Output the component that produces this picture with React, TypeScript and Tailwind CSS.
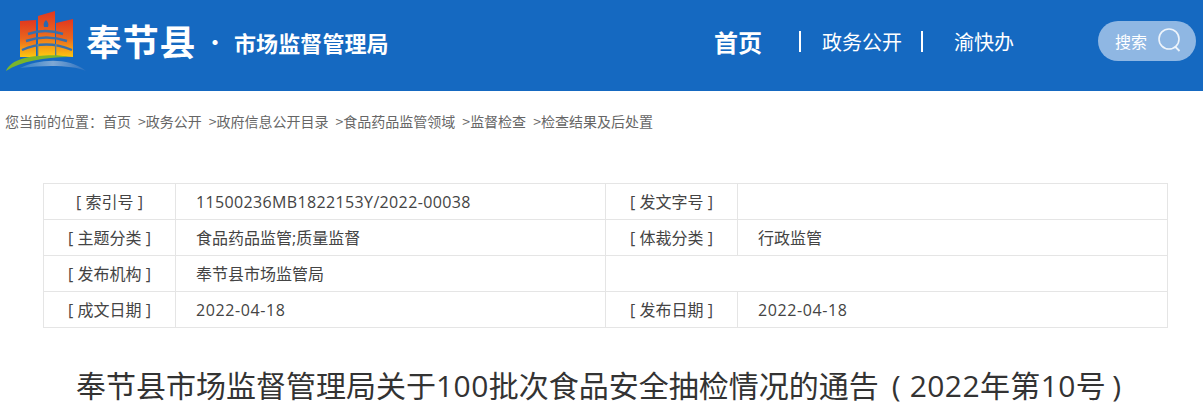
const font = { fontFamily: '"Open Sans", "Noto Sans CJK SC", sans-serif' };
const cjk = { fontFamily: '"Noto Sans CJK SC", sans-serif' };

const crumbs = ['政务公开', '政府信息公开目录', '食品药品监管领域', '监督检查', '检查结果及后处置'];

const rows = [
  ['[ 索引号 ]', '11500236MB1822153Y/2022-00038', '[ 发文字号 ]', ''],
  ['[ 主题分类 ]', '食品药品监管;质量监督', '[ 体裁分类 ]', '行政监管'],
  ['[ 发布机构 ]', '奉节县市场监管局', '', ''],
  ['[ 成文日期 ]', '2022-04-18', '[ 发布日期 ]', '2022-04-18'],
];

function Logo() {
  return (
    <svg width="82" height="62" viewBox="0 0 82 62" className="shrink-0">
      <defs>
        <linearGradient id="sky" x1="0" y1="0" x2="0" y2="1">
          <stop offset="0" stopColor="#e0371f" />
          <stop offset="0.5" stopColor="#e9651d" />
          <stop offset="1" stopColor="#fdc60f" />
        </linearGradient>
        <linearGradient id="swoosh" x1="0" y1="0" x2="1" y2="0">
          <stop offset="0" stopColor="#2f7fc8" />
          <stop offset="0.5" stopColor="#7fa8d4" />
          <stop offset="1" stopColor="#2a70c0" />
        </linearGradient>
      </defs>
      <path d="M15 11 L31 10 V47 L15 47 Z" fill="url(#sky)" />
      <path d="M33 6 L50 1 V46 L33 46 Z" fill="url(#sky)" />
      <path d="M51 13 L68 9 V47 L51 46 Z" fill="url(#sky)" />
      <path d="M41 10 c-2 2 -3 4 -2 7 h4 c1 -3 0 -5 -2 -7 Z" fill="#2a68b0" />
      <path d="M23 24 Q40 18 58 24 M21 31 Q41 24 62 31 M17 40 Q41 29 67 40" fill="none" stroke="#3a6fa8" strokeWidth="2.4" />
      <path d="M33 34 V46 M51 34 V46" stroke="#8a8f6a" strokeWidth="1" />
      <path d="M1 61 C5 51 20 46 40 45.5 C50 45 58 45.5 63 47 C40 47.5 16 51 1 61 Z" fill="#7ab52b" />
      <path d="M15 58 C32 50 62 46 81 61 C68 55 40 55 15 58 Z" fill="url(#swoosh)" />
    </svg>
  );
}

function Cell({ text, center }: { text: string; center?: boolean }) {
  const latin = /^[\x00-\x7f]+$/.test(text);
  const spacing = !latin || center ? '' : text.length > 10 ? 'tracking-[0.36px]' : 'tracking-[0.6px]';
  return (
    <td className={`border border-[#e5e5e5] py-0 ${center ? 'text-center px-0' : 'pl-[20px]'} ${spacing}`}>
      {text}
    </td>
  );
}

export default function App() {
  return (
    <div className="w-[1203px] h-[416px] overflow-hidden bg-white" style={font}>
      <header className="h-[91px] pb-[8px] bg-[#1569c1] flex items-center text-white" style={cjk}>
        <div className="ml-[5px] mt-[-2px]">
          <Logo />
        </div>
        <span className="ml-[-1px] text-[36px] tracking-[0.7px] font-bold leading-none mt-[-3px] w-[118px]">奉节县</span>
        <span className="ml-[-4px] w-[30px] text-center text-[20px] font-bold leading-none">·</span>
        <span className="ml-[4px] text-[22px] tracking-[0.1px] font-bold leading-none w-[156px]">市场监督管理局</span>
        <nav className="ml-[324px] flex items-center">
          <span className="text-[24px] font-bold leading-none w-[48px]">首页</span>
          <span className="ml-[37px] w-[2px] h-[21px] bg-white" />
          <span className="ml-[21px] text-[20px] leading-none w-[80px]">政务公开</span>
          <span className="ml-[19px] w-[2px] h-[21px] bg-white" />
          <span className="ml-[31px] text-[20px] leading-none w-[60px]">渝快办</span>
        </nav>
        <div className="ml-[84px] w-[98px] h-[40px] mt-[-1px] rounded-[20px] bg-[#8fb7e3] flex items-center pl-[17px]">
          <span className="text-[16px] leading-none w-[34px]">搜索</span>
          <svg width="24" height="25" viewBox="0 0 24 25" className="ml-[9px] shrink-0 mb-[1px]" fill="none" stroke="#ffffff" strokeOpacity="0.85">
            <circle cx="11" cy="11" r="10" strokeWidth="1.6" />
            <path d="M17.5 19 L21.5 23" strokeWidth="1.8" />
          </svg>
        </div>
      </header>

      <div className="h-[62px] pl-[5px] pt-[21px] flex items-start text-[14px] leading-[18px] text-[#666]" style={cjk}>
        <span>您当前的位置：首页</span>
        {crumbs.map((c) => (
          <span key={c} className="ml-[7px]">&gt;{c}</span>
        ))}
      </div>

      <table className="ml-[43px] mt-[30px] w-[1124px] table-fixed border-collapse text-[16px] text-[#444]">
        <colgroup>
          <col className="w-[132px]" />
          <col className="w-[430px]" />
          <col className="w-[132px]" />
          <col className="w-[430px]" />
        </colgroup>
        <tbody>
          {rows.map((r, i) => (
            <tr key={i} className="h-[36px]">
              <Cell text={r[0]} center />
              <Cell text={r[1]} />
              {r[2] ? (
                <>
                  <Cell text={r[2]} center />
                  <Cell text={r[3]} />
                </>
              ) : (
                <td colSpan={2} className="border border-[#e5e5e5]" />
              )}
            </tr>
          ))}
        </tbody>
      </table>

      <h1 className="mt-[38px] pr-[6px] text-center text-[30px] leading-[40px] text-[#333] whitespace-nowrap">
        奉节县市场监督管理局关于<span className="tracking-[0.5px]">100</span>批次食品安全抽检情况的通告
        <span className="ml-[13px]">(</span>
        <span className="ml-[9px] tracking-[0.4px]">2022年第10号</span>
        <span className="ml-[6px]">)</span>
      </h1>
    </div>
  );
}
